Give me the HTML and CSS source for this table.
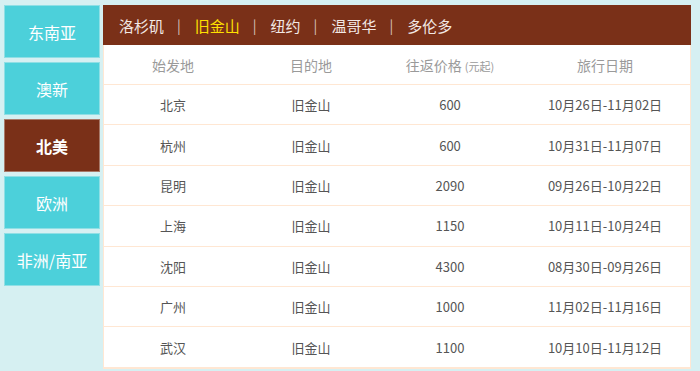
FILE: index.html
```html
<!DOCTYPE html>
<html lang="zh">
<head>
<meta charset="utf-8">
<link rel="stylesheet" href="styles.css">
</head>
<body>
<div class="wrap">
  <ul class="tabs">
    <li class="tab">东南亚</li>
    <li class="tab">澳新</li>
    <li class="tab active">北美</li>
    <li class="tab">欧洲</li>
    <li class="tab">非洲/南亚</li>
  </ul>
  <div class="panel">
    <div class="cities">
      <span class="city">洛杉矶</span><span class="sep">|</span>
      <span class="city current">旧金山</span><span class="sep">|</span>
      <span class="city">纽约</span><span class="sep">|</span>
      <span class="city">温哥华</span><span class="sep">|</span>
      <span class="city">多伦多</span>
    </div>
    <table class="fares">
      <colgroup><col class="c1"><col class="c2"><col class="c3"><col class="c4"></colgroup>
      <thead>
        <tr><th>始发地</th><th>目的地</th><th>往返价格 <small>(元起)</small></th><th>旅行日期</th></tr>
      </thead>
      <tbody>
        <tr><td>北京</td><td>旧金山</td><td>600</td><td>10月26日-11月02日</td></tr>
        <tr><td>杭州</td><td>旧金山</td><td>600</td><td>10月31日-11月07日</td></tr>
        <tr><td>昆明</td><td>旧金山</td><td>2090</td><td>09月26日-10月22日</td></tr>
        <tr><td>上海</td><td>旧金山</td><td>1150</td><td>10月11日-10月24日</td></tr>
        <tr><td>沈阳</td><td>旧金山</td><td>4300</td><td>08月30日-09月26日</td></tr>
        <tr><td>广州</td><td>旧金山</td><td>1000</td><td>11月02日-11月16日</td></tr>
        <tr><td>武汉</td><td>旧金山</td><td>1100</td><td>10月10日-11月12日</td></tr>
      </tbody>
    </table>
  </div>
</div>
</body>
</html>
```
FILE: styles.css
```css
html, body {
  margin: 0;
  padding: 0;
  background: #d6f0f2;
  font-family: "Noto Sans CJK SC", "Noto Sans", sans-serif;
}
.wrap {
  display: flex;
  align-items: flex-start;
  gap: 3px;
  padding: 5px 0 0 4px;
}
.tabs {
  list-style: none;
  margin: 0;
  padding: 0;
  width: 96px;
  display: flex;
  flex-direction: column;
  gap: 4px;
}
.tab {
  box-sizing: border-box;
  height: 53px;
  background: #4cd0da;
  border: 1px solid #8fdfe5;
  color: #fff;
  font-size: 16px;
  display: flex;
  align-items: center;
  justify-content: center;
}
.tab.active {
  background: #7a3018;
  border-color: #a87a6a;
  font-weight: bold;
}
.panel {
  width: 588px;
  box-sizing: border-box;
  border: 1px solid #ffe7d3;
  border-top: 0;
  border-bottom-width: 2px;
  background: #fff;
}
.cities {
  height: 40px;
  margin: 0 -1px;
  background: #7a3018;
  display: flex;
  align-items: center;
  padding-left: 16px;
  color: #f2e8e4;
  font-size: 15px;
}
.city.current { color: #ffe000; }
.sep {
  margin: 0 14px 0 13px;
  color: #d9c3bb;
  font-size: 14px;
}
.fares {
  width: 100%;
  border-collapse: collapse;
  table-layout: fixed;
}
.c1 { width: 138px; }
.c2 { width: 138px; }
.c3 { width: 140px; }
.c4 { width: auto; }
.fares th, .fares td {
  padding: 0;
  text-align: center;
  border-bottom: 1px solid #ffe7d3;
}
.fares th {
  height: 39px;
  font-weight: normal;
  color: #9a9a9a;
  font-size: 14px;
}
.fares th small {
  font-size: 11px;
  color: #9a9a9a;
}
.fares td {
  height: 39.4px;
  color: #555;
  font-size: 13px;
}
.fares tbody tr:last-child td { border-bottom: 0; }
```
